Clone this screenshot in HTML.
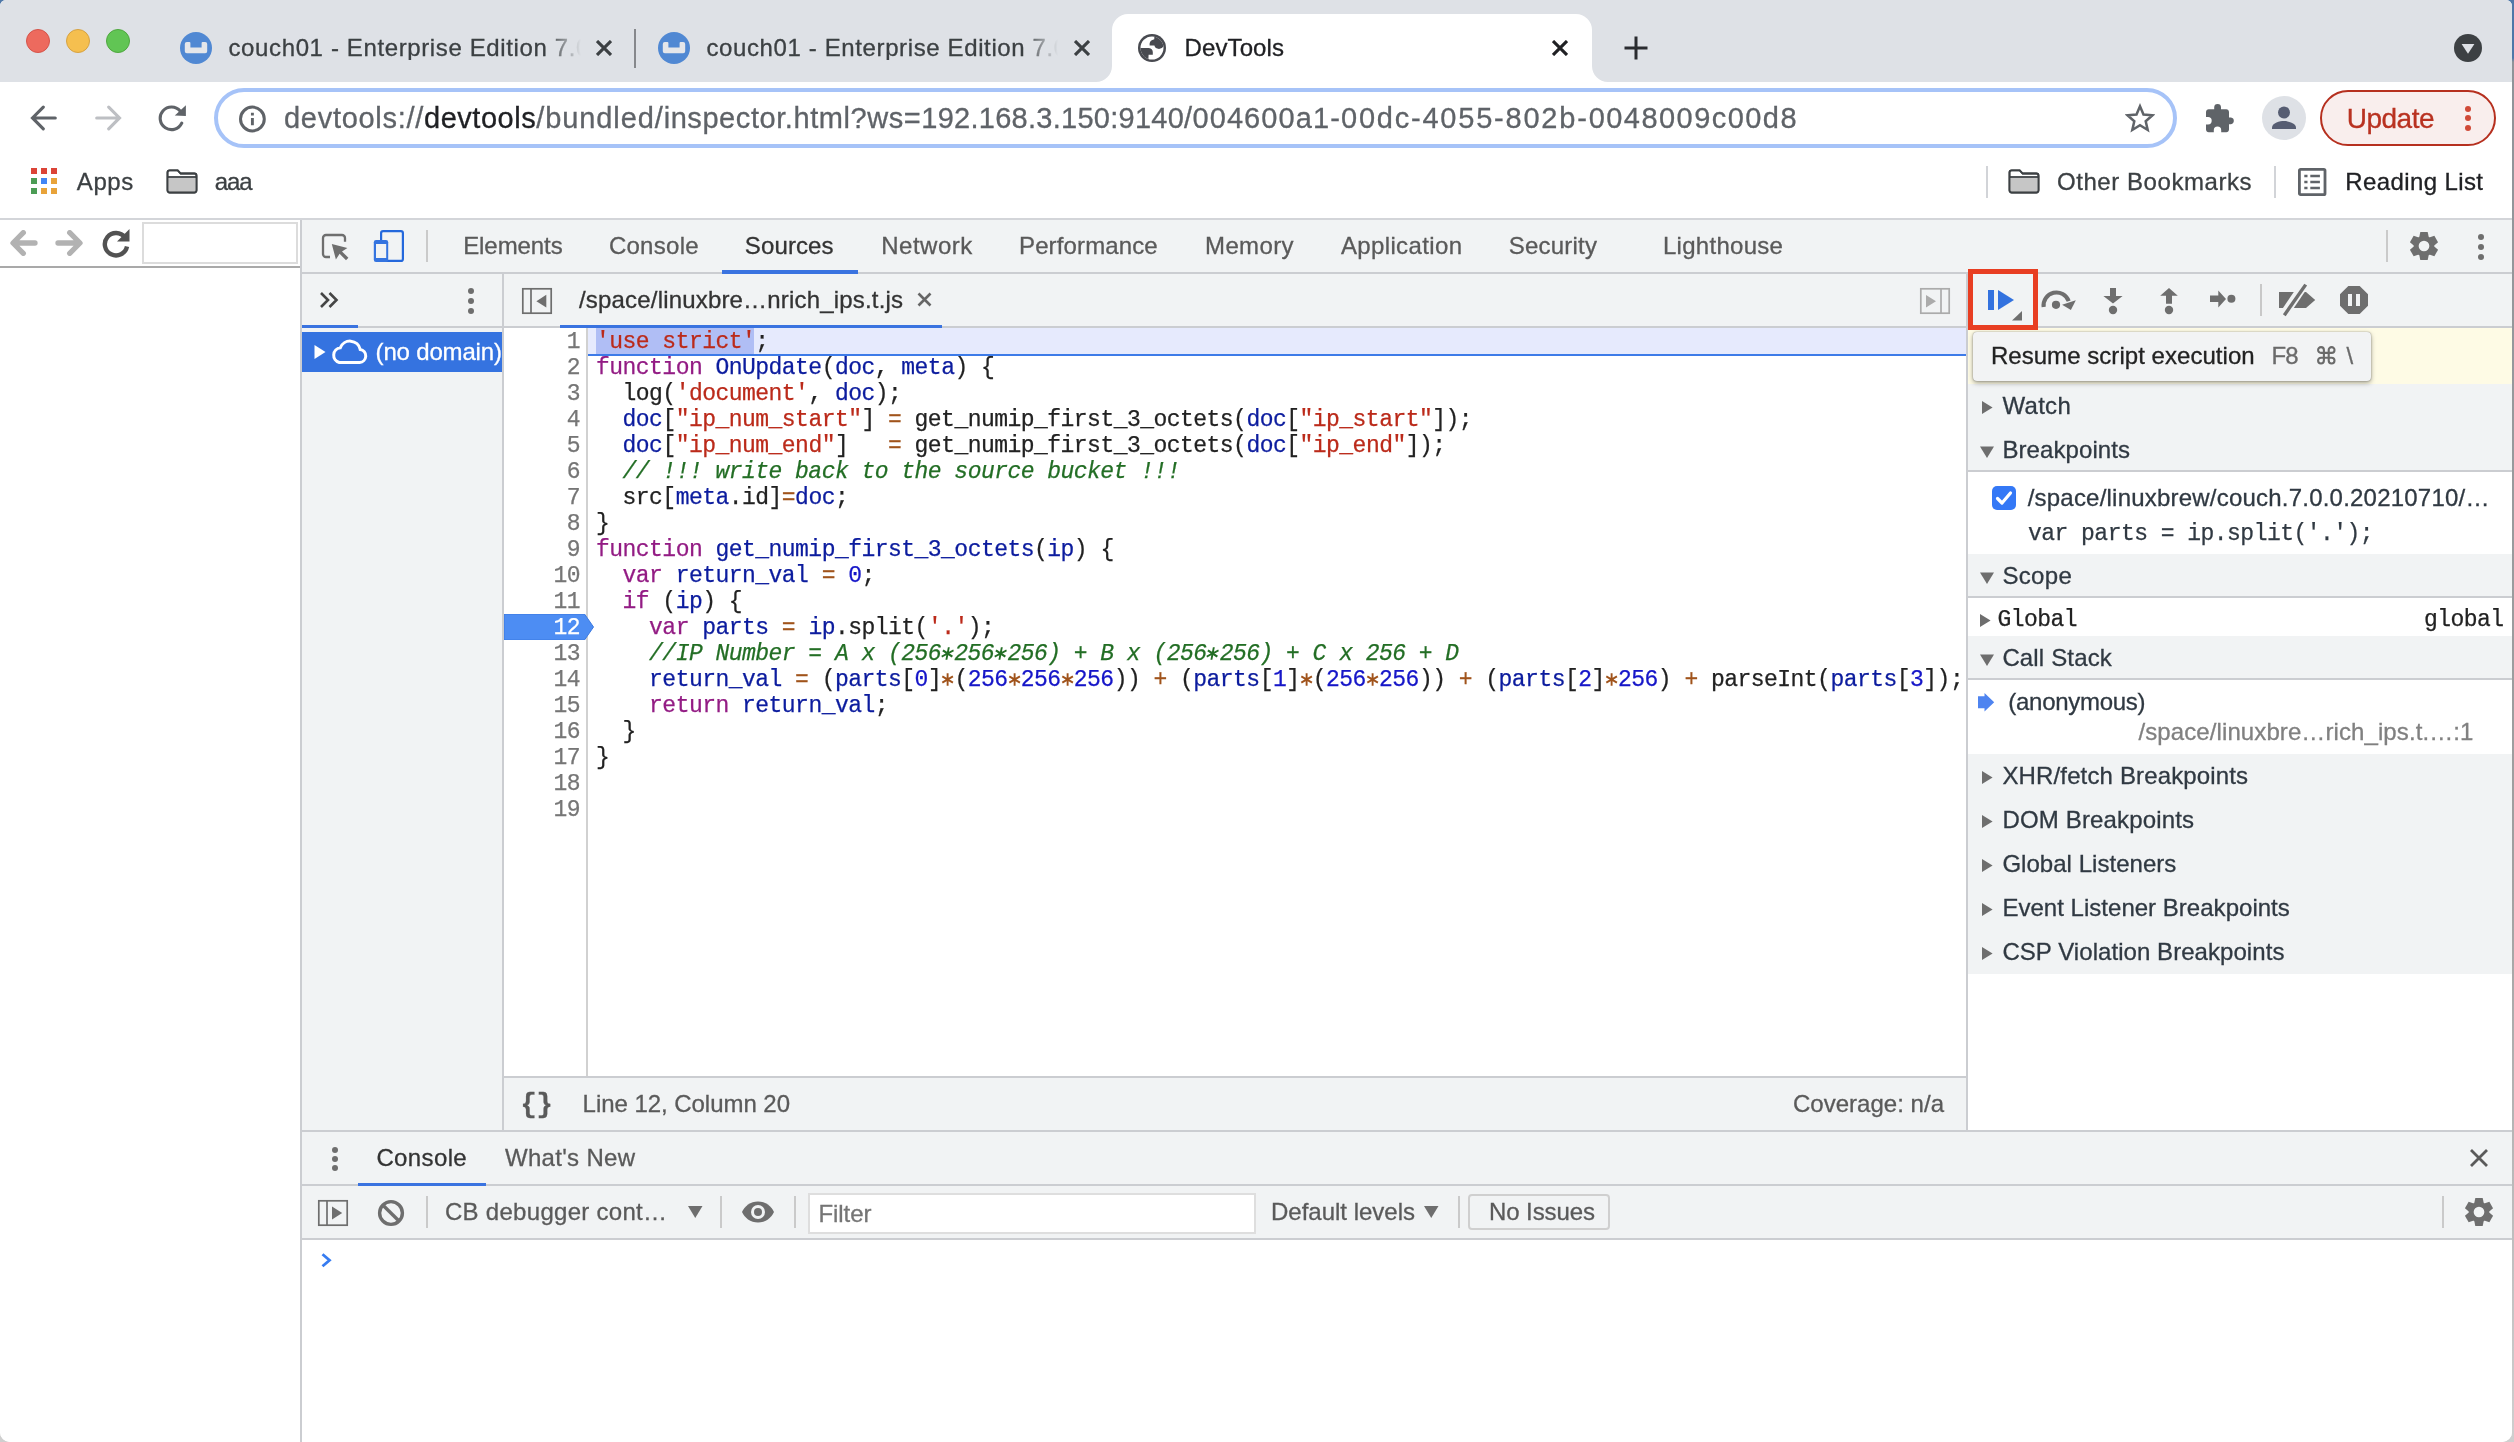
<!DOCTYPE html>
<html><head><meta charset="utf-8"><title>DevTools</title>
<style>
html,body{margin:0;padding:0;}
body{width:2514px;height:1442px;overflow:hidden;position:relative;background:linear-gradient(#4f78a8 0,#4f78a8 58px,#8f9499 62px,#a0a0a0 60%,#cfcfcf 100%);font-family:"Liberation Sans",sans-serif;}
.r{position:absolute;display:block;box-sizing:border-box;}
.t{position:absolute;white-space:pre;font-family:"Liberation Sans",sans-serif;-webkit-text-stroke:0.3px currentColor;}
.m{font-family:"Liberation Mono",monospace;}
#win{position:absolute;left:0;top:0;width:2512px;height:1442px;background:#fff;border-radius:6px 6px 10px 10px;overflow:hidden;}
.code{position:absolute;white-space:pre;font-family:"Liberation Mono",monospace;font-size:23px;line-height:26px;letter-spacing:-0.530px;color:#222;-webkit-text-stroke:0.25px currentColor;}
.as{display:inline-block;vertical-align:baseline;overflow:visible;}
.k{color:#931c84}.d{color:#0c1c9e}.s{color:#bb2a1a}.n{color:#1616c8}.o{color:#a0531b}.c{color:#236e25;font-style:italic}
#ly{position:absolute;left:0;top:0;width:2512px;height:1442px;will-change:transform;}

</style></head>
<body>
<div id="win"><div id="ly">
<div class="r" style="left:0px;top:0px;width:2512px;height:82px;background:#dee1e6;"></div>
<div class="r" style="left:26px;top:29px;width:24px;height:24px;background:#ed6a5e;border-radius:50%;border:1px solid #d5544a;"></div>
<div class="r" style="left:66px;top:29px;width:24px;height:24px;background:#f5bf4f;border-radius:50%;border:1px solid #d6a243;"></div>
<div class="r" style="left:106px;top:29px;width:24px;height:24px;background:#61c554;border-radius:50%;border:1px solid #4fa73f;"></div>
<svg class="r" style="left:180px;top:32px;" width="32" height="32" viewBox="0 0 32 32"><circle cx="16" cy="16" r="16" fill="#5088d3"/><path d="M4.800 12q0-2 2-2h2.600q1 0 1 1v4.500h11.200V11q0-1 1-1h2.600q2 0 2 2v7.200q0 2-2 2H6.800q-2 0-2-2z" fill="#e4e6ea"/></svg>
<span class="t" style="left:228.50px;top:36.00px;font-size:24px;line-height:24px;color:#3c4043;letter-spacing:0.622px;width:352px;overflow:hidden;-webkit-mask-image:linear-gradient(90deg,#000 318px,transparent 352px);">couch01 - Enterprise Edition 7.0</span>
<svg class="r" style="left:596px;top:40px;" width="16" height="16" viewBox="0 0 16 16"><path d="M1 1l14 14M15 1L1 15" stroke="#3c4043" stroke-width="3.1" fill="none"/></svg>
<div class="r" style="left:634px;top:29px;width:2px;height:39px;background:#86888c;"></div>
<svg class="r" style="left:658px;top:32px;" width="32" height="32" viewBox="0 0 32 32"><circle cx="16" cy="16" r="16" fill="#5088d3"/><path d="M4.800 12q0-2 2-2h2.600q1 0 1 1v4.500h11.200V11q0-1 1-1h2.600q2 0 2 2v7.200q0 2-2 2H6.800q-2 0-2-2z" fill="#e4e6ea"/></svg>
<span class="t" style="left:706.40px;top:36.00px;font-size:24px;line-height:24px;color:#3c4043;letter-spacing:0.622px;width:352px;overflow:hidden;-webkit-mask-image:linear-gradient(90deg,#000 318px,transparent 352px);">couch01 - Enterprise Edition 7.0</span>
<svg class="r" style="left:1074px;top:40px;" width="16" height="16" viewBox="0 0 16 16"><path d="M1 1l14 14M15 1L1 15" stroke="#3c4043" stroke-width="3.1" fill="none"/></svg>
<div class="r" style="left:1112px;top:14px;width:480px;height:70px;background:#fff;border-radius:16px 16px 0 0;"></div>
<svg class="r" style="left:1096px;top:66px;" width="16" height="16" viewBox="0 0 16 16"><path d="M16 0v16H0C8.8 16 16 8.800 16 0z" fill="#fff"/></svg>
<svg class="r" style="left:1592px;top:66px;" width="16" height="16" viewBox="0 0 16 16"><path d="M0 0v16h16C7.200 16 0 8.800 0 0z" fill="#fff"/></svg>
<svg class="r" style="left:1138px;top:34px;" width="28" height="28" viewBox="0 0 28 28"><defs><clipPath id="gc"><circle cx="14" cy="14" r="11.500"/></clipPath></defs><circle cx="14" cy="14" r="14" fill="#484a50"/><circle cx="14" cy="14" r="11.500" fill="#fff"/><g clip-path="url(#gc)" fill="#484a50"><path d="M16.300 1v4.200Q12 6.300 11.600 9.500v2.100h4.800Q17.200 14.800 21 14.900 24.200 14.600 25.800 12.200L28 12V0H16z"/><path d="M0 14h10.900Q14.600 14.500 14.800 18v2.800h-4.200L10.300 27 0 28z"/></g></svg>
<span class="t" style="left:1184.50px;top:36.00px;font-size:24px;line-height:24px;color:#202124;letter-spacing:0.112px;">DevTools</span>
<svg class="r" style="left:1552px;top:40px;" width="16" height="16" viewBox="0 0 16 16"><path d="M1 1l14 14M15 1L1 15" stroke="#202124" stroke-width="3.1" fill="none"/></svg>
<svg class="r" style="left:1624px;top:36px;" width="24" height="24" viewBox="0 0 24 24"><path d="M12 0.500v23M0.500 12h23" stroke="#2a2c30" stroke-width="3" fill="none"/></svg>
<svg class="r" style="left:2454px;top:34px;" width="28" height="28" viewBox="0 0 28 28"><circle cx="14" cy="14" r="14" fill="#3c4043"/><path d="M7.600 10h12.800L14 19.800z" fill="#dee1e6"/></svg>
<div class="r" style="left:0px;top:82px;width:2512px;height:136px;background:#fff;"></div>
<svg class="r" style="left:30px;top:104.7px;" width="28" height="26" viewBox="0 0 28 26"><path d="M25.300 12.950H3.200M13.300 2.100L2.500 12.950l10.800 10.850" stroke="#5f6368" stroke-width="3.100" fill="none" stroke-linecap="round" stroke-linejoin="miter"/></svg>
<svg class="r" style="left:94px;top:104.7px;transform:scaleX(-1);" width="28" height="26" viewBox="0 0 28 26"><path d="M25.300 12.950H3.200M13.300 2.100L2.500 12.950l10.800 10.850" stroke="#bdbfc3" stroke-width="3.100" fill="none" stroke-linecap="round" stroke-linejoin="miter"/></svg>
<svg class="r" style="left:158px;top:103px;" width="30" height="30" viewBox="0 0 30 30"><path d="M22.160 8.040A11.300 11.300 0 1 0 23.740 20.080" stroke="#5f6368" stroke-width="3.100" fill="none" stroke-linecap="round"/><path d="M27.900 2.200v10.800l-11.100-.4z" fill="#5f6368"/></svg>
<div class="r" style="left:214px;top:88px;width:1963px;height:60px;background:#fff;border:4.300px solid #a6c3f8;border-radius:30px;"></div>
<svg class="r" style="left:238px;top:104.5px;" width="29" height="29" viewBox="0 0 29 29"><circle cx="14.400" cy="14" r="11.900" stroke="#5f6368" stroke-width="3" fill="none"/><path d="M14.400 12.900v7.400M14.400 7.800v2.600" stroke="#5f6368" stroke-width="2.900"/></svg>
<span class="t" style="left:284.00px;top:104.00px;font-size:29px;line-height:29px;color:#5f6368;"><span style="color:#5f6368;letter-spacing:0.710px">devtools://</span><span style="color:#202124;letter-spacing:0.536px">devtools</span><span style="color:#5f6368;letter-spacing:0.886px">/bundled/</span><span style="color:#5f6368;letter-spacing:0.571px">inspector.html?ws=</span><span style="color:#5f6368;letter-spacing:0.263px">192.168.3.150:9140/</span><span style="color:#5f6368;letter-spacing:1.101px">004600a1-</span><span style="color:#5f6368;letter-spacing:1.781px">00dc-4055-802b-</span><span style="color:#5f6368;letter-spacing:1.457px">0048009c00d8</span></span>
<svg class="r" style="left:2125px;top:103px;" width="30" height="30" viewBox="0 0 30 30"><path d="M15 3.200l3.500 8.300 9 .8-6.800 5.900 2 8.800L15 22.300 7.300 27l2-8.800L2.500 12.300l9-.8z" stroke="#5f6368" stroke-width="2.500" fill="none" stroke-linejoin="miter"/></svg>
<svg class="r" style="left:2204px;top:102px;" width="32" height="32" viewBox="0 0 32 32"><path d="M27 15.500h-2V10c0-1.500-1.200-2.700-2.700-2.700H17v-2a3.400 3.400 0 0 0-6.800 0v2H4.700C3.200 7.300 2 8.500 2 10v5.100h2a3.700 3.700 0 0 1 0 7.400H2v5.100c0 1.500 1.200 2.700 2.700 2.700h5.100v-2a3.700 3.700 0 0 1 7.400 0v2h5.100c1.500 0 2.700-1.200 2.700-2.700v-5.400h2a3.400 3.400 0 0 0 0-6.700z" fill="#5f6368"/></svg>
<svg class="r" style="left:2262px;top:96px;" width="44" height="44" viewBox="0 0 44 44"><circle cx="22" cy="22" r="22" fill="#dee1e6"/><circle cx="22" cy="16.500" r="6" fill="#565d72"/><path d="M10 31.500c0-4.600 8-6.500 12-6.500s12 1.900 12 6.500V33H10z" fill="#565d72"/></svg>
<div class="r" style="left:2320px;top:90px;width:176px;height:56px;background:#f9eeed;border:2.300px solid #b6301f;border-radius:28px;"></div>
<span class="t" style="left:2346.70px;top:105.00px;font-size:28px;line-height:28px;color:#b93221;letter-spacing:-0.499px;">Update</span>
<div class="r" style="left:2465px;top:105.5px;width:6px;height:6px;background:#d04a38;border-radius:50%;"></div>
<div class="r" style="left:2465px;top:115.3px;width:6px;height:6px;background:#d04a38;border-radius:50%;"></div>
<div class="r" style="left:2465px;top:125.2px;width:6px;height:6px;background:#d04a38;border-radius:50%;"></div>
<div class="r" style="left:31px;top:168px;width:6px;height:6px;background:#db4437;"></div>
<div class="r" style="left:41px;top:168px;width:6px;height:6px;background:#db4437;"></div>
<div class="r" style="left:51px;top:168px;width:6px;height:6px;background:#db4437;"></div>
<div class="r" style="left:31px;top:178px;width:6px;height:6px;background:#4c9c55;"></div>
<div class="r" style="left:41px;top:178px;width:6px;height:6px;background:#4285f4;"></div>
<div class="r" style="left:51px;top:178px;width:6px;height:6px;background:#e8a33a;"></div>
<div class="r" style="left:31px;top:188px;width:6px;height:6px;background:#4c9c55;"></div>
<div class="r" style="left:41px;top:188px;width:6px;height:6px;background:#e8a33a;"></div>
<div class="r" style="left:51px;top:188px;width:6px;height:6px;background:#e8a33a;"></div>
<span class="t" style="left:76.80px;top:170.00px;font-size:24px;line-height:24px;color:#3c4043;letter-spacing:0.599px;">Apps</span>
<svg class="r" style="left:166px;top:168px;" width="32" height="26" viewBox="0 0 32 26"><path d="M1.500 4.500c0-1.400.8-2.200 2.200-2.200h8l3 3.200h13.600c1.400 0 2.200.8 2.200 2.200v14.600c0 1.400-.8 2.200-2.200 2.200H3.700c-1.400 0-2.200-.8-2.200-2.200z" fill="#fff" stroke="#3c4043" stroke-width="1.800"/><path d="M2.400 9.800h27.200v12.600c0 .8-.5 1.300-1.300 1.300H3.700c-.8 0-1.300-.5-1.300-1.300z" fill="#c6c6c6"/><path d="M1.500 9h29" stroke="#3c4043" stroke-width="1.800"/><path d="M1.500 4.500c0-1.400.8-2.200 2.200-2.200h8l3 3.200h13.600c1.400 0 2.200.8 2.200 2.200v14.600c0 1.400-.8 2.200-2.200 2.200H3.700c-1.400 0-2.200-.8-2.200-2.200z" fill="none" stroke="#3c4043" stroke-width="1.800"/></svg>
<span class="t" style="left:214.80px;top:170.00px;font-size:24px;line-height:24px;color:#3c4043;letter-spacing:-1.073px;">aaa</span>
<div class="r" style="left:1986px;top:166px;width:2px;height:32px;background:#d2d4d8;"></div>
<svg class="r" style="left:2008px;top:168px;" width="32" height="26" viewBox="0 0 32 26"><path d="M1.500 4.500c0-1.400.8-2.200 2.200-2.200h8l3 3.200h13.600c1.400 0 2.200.8 2.200 2.200v14.600c0 1.400-.8 2.200-2.200 2.200H3.700c-1.400 0-2.200-.8-2.200-2.200z" fill="#fff" stroke="#3c4043" stroke-width="1.800"/><path d="M2.400 9.800h27.200v12.600c0 .8-.5 1.300-1.300 1.300H3.700c-.8 0-1.300-.5-1.300-1.300z" fill="#c6c6c6"/><path d="M1.500 9h29" stroke="#3c4043" stroke-width="1.800"/><path d="M1.500 4.500c0-1.400.8-2.200 2.200-2.200h8l3 3.200h13.600c1.400 0 2.200.8 2.200 2.200v14.600c0 1.400-.8 2.200-2.200 2.200H3.700c-1.400 0-2.200-.8-2.200-2.200z" fill="none" stroke="#3c4043" stroke-width="1.800"/></svg>
<span class="t" style="left:2057.00px;top:170.00px;font-size:24px;line-height:24px;color:#3c4043;letter-spacing:0.555px;">Other Bookmarks</span>
<div class="r" style="left:2274px;top:166px;width:2px;height:32px;background:#d2d4d8;"></div>
<svg class="r" style="left:2298px;top:168px;" width="29" height="28" viewBox="0 0 29 28"><rect x="1.400" y="1.400" width="25.600" height="25.200" rx="1.200" fill="none" stroke="#5f6368" stroke-width="2.800"/><path d="M6.300 8h3.200M6.300 14h3.200M6.300 20h3.200M12.300 8h9.600M12.300 14h9.600M12.300 20h9.600" stroke="#5f6368" stroke-width="2.600"/></svg>
<span class="t" style="left:2345.20px;top:170.00px;font-size:24px;line-height:24px;color:#202124;letter-spacing:0.398px;">Reading List</span>
<div class="r" style="left:0px;top:218px;width:2512px;height:2px;background:#d3d5d9;"></div>
<div class="r" style="left:0px;top:220px;width:300px;height:1222px;background:#fff;"></div>
<svg class="r" style="left:8px;top:230px;" width="32" height="26" viewBox="0 0 32 26"><path d="M27 13H6M15.300 2.700L5 13l10.300 10.300" stroke="#b2b2b2" stroke-width="5.300" fill="none" stroke-linecap="round" stroke-linejoin="round"/></svg>
<svg class="r" style="left:53px;top:230px;transform:scaleX(-1);" width="32" height="26" viewBox="0 0 32 26"><path d="M27 13H6M15.300 2.700L5 13l10.300 10.300" stroke="#b2b2b2" stroke-width="5.300" fill="none" stroke-linecap="round" stroke-linejoin="round"/></svg>
<svg class="r" style="left:100px;top:227px;" width="32" height="32" viewBox="0 0 32 32"><path d="M25 10.500A11.200 11.200 0 1 0 27 19.500" stroke="#525252" stroke-width="4.400" fill="none"/><path d="M29.500 2v12.500H17z" fill="#525252"/></svg>
<div class="r" style="left:142px;top:222px;width:156px;height:42px;background:#fff;border:2px solid #dcdcdc;"></div>
<div class="r" style="left:0px;top:266px;width:300px;height:2px;background:#a9a9a9;"></div>
<div class="r" style="left:300px;top:220px;width:2px;height:1222px;background:#cbcdd1;"></div>
<div class="r" style="left:302px;top:220px;width:2210px;height:52px;background:#f1f3f4;"></div>
<div class="r" style="left:302px;top:272px;width:2210px;height:2px;background:#cbcdd1;"></div>
<svg class="r" style="left:320px;top:232px;" width="30" height="30" viewBox="0 0 30 30"><path d="M25 9.800V6a3 3 0 0 0-3-3H6a3 3 0 0 0-3 3v16a3 3 0 0 0 3 3h4" stroke="#6e6e6e" stroke-width="2.300" fill="none"/><path d="M11.800 11.900l15.600 4.100-5.400 3.400 6.400 6.400-2.400 2.400-6.400-6.400-3.700 5.700z" fill="#6e6e6e"/></svg>
<svg class="r" style="left:372px;top:228px;" width="34" height="36" viewBox="0 0 34 36"><rect x="9.100" y="3.100" width="21.800" height="29.800" rx="2" fill="none" stroke="#2468dc" stroke-width="2.200"/><rect x="1.800" y="12" width="14.400" height="22" rx="2.200" fill="#3574e0"/><rect x="4" y="16" width="10.200" height="14" fill="#f1f3f4"/></svg>
<div class="r" style="left:426px;top:230px;width:2px;height:32px;background:#cacaca;"></div>
<span class="t" style="left:463.20px;top:234.00px;font-size:24px;line-height:24px;color:#5a5a5a;letter-spacing:-0.078px;">Elements</span>
<span class="t" style="left:608.90px;top:234.00px;font-size:24px;line-height:24px;color:#5a5a5a;letter-spacing:0.273px;">Console</span>
<span class="t" style="left:744.80px;top:234.00px;font-size:24px;line-height:24px;color:#333;letter-spacing:0.126px;">Sources</span>
<span class="t" style="left:881.20px;top:234.00px;font-size:24px;line-height:24px;color:#5a5a5a;letter-spacing:0.511px;">Network</span>
<span class="t" style="left:1019.00px;top:234.00px;font-size:24px;line-height:24px;color:#5a5a5a;letter-spacing:0.131px;">Performance</span>
<span class="t" style="left:1205.00px;top:234.00px;font-size:24px;line-height:24px;color:#5a5a5a;letter-spacing:0.386px;">Memory</span>
<span class="t" style="left:1340.90px;top:234.00px;font-size:24px;line-height:24px;color:#5a5a5a;letter-spacing:0.368px;">Application</span>
<span class="t" style="left:1508.80px;top:234.00px;font-size:24px;line-height:24px;color:#5a5a5a;letter-spacing:0.200px;">Security</span>
<span class="t" style="left:1663.00px;top:234.00px;font-size:24px;line-height:24px;color:#5a5a5a;letter-spacing:0.274px;">Lighthouse</span>
<div class="r" style="left:722px;top:270px;width:136px;height:4px;background:#3a73e0;"></div>
<div class="r" style="left:2386px;top:230px;width:2px;height:32px;background:#cacaca;"></div>
<svg class="r" style="left:2409px;top:231px;" width="30" height="30" viewBox="0 0 30 30"><g transform="translate(15 15)"><g fill="#6e6e6e"><path d="M-3.700-14.100h7.400L4.900-8h-9.800z" transform="rotate(0)"/><path d="M-3.700-14.100h7.400L4.900-8h-9.800z" transform="rotate(60)"/><path d="M-3.700-14.100h7.400L4.900-8h-9.800z" transform="rotate(120)"/><path d="M-3.700-14.100h7.400L4.900-8h-9.800z" transform="rotate(180)"/><path d="M-3.700-14.100h7.400L4.900-8h-9.800z" transform="rotate(240)"/><path d="M-3.700-14.100h7.400L4.900-8h-9.800z" transform="rotate(300)"/></g><circle r="7.800" fill="none" stroke="#6e6e6e" stroke-width="4.900"/></g></svg>
<div class="r" style="left:2477.8px;top:233.9px;width:6.2px;height:6.2px;background:#6e6e6e;border-radius:50%;"></div>
<div class="r" style="left:2477.8px;top:243.9px;width:6.2px;height:6.2px;background:#6e6e6e;border-radius:50%;"></div>
<div class="r" style="left:2477.8px;top:253.9px;width:6.2px;height:6.2px;background:#6e6e6e;border-radius:50%;"></div>
<div class="r" style="left:302px;top:274px;width:2210px;height:52px;background:#f1f3f4;"></div>
<div class="r" style="left:302px;top:326px;width:1664px;height:2px;background:#cbcdd1;"></div>
<div class="r" style="left:1968px;top:326px;width:544px;height:2px;background:#cbcdd1;"></div>
<div class="r" style="left:302px;top:325px;width:56px;height:3px;background:#3a73e0;"></div>
<svg class="r" style="left:318px;top:290px;" width="22" height="20" viewBox="0 0 22 20"><path d="M3 3l7 7-7 7M11.500 3l7 7-7 7" stroke="#454545" stroke-width="2.600" fill="none"/></svg>
<div class="r" style="left:468px;top:288px;width:6px;height:6px;background:#6e6e6e;border-radius:50%;"></div>
<div class="r" style="left:468px;top:298px;width:6px;height:6px;background:#6e6e6e;border-radius:50%;"></div>
<div class="r" style="left:468px;top:308px;width:6px;height:6px;background:#6e6e6e;border-radius:50%;"></div>
<div class="r" style="left:502px;top:274px;width:2px;height:858px;background:#cbcdd1;"></div>
<svg class="r" style="left:521px;top:287px;" width="32" height="28" viewBox="0 0 32 28"><rect x="1.800" y="1.800" width="28.400" height="24.400" fill="none" stroke="#6e6e6e" stroke-width="1.700"/><path d="M10 2v24" stroke="#6e6e6e" stroke-width="1.700"/><path d="M25.300 7.800v12.800L15.400 14.200z" fill="#6e6e6e"/></svg>
<span class="t" style="left:579.00px;top:288.00px;font-size:24px;line-height:24px;color:#333;letter-spacing:0.179px;">/space/linuxbre…nrich_ips.t.js</span>
<svg class="r" style="left:916.5px;top:291.5px;" width="15" height="15" viewBox="0 0 15 15"><path d="M1.500 1.500l12 12M13.500 1.500l-12 12" stroke="#666" stroke-width="2.600" fill="none"/></svg>
<div class="r" style="left:560px;top:325px;width:382px;height:3px;background:#3a73e0;"></div>
<svg class="r" style="left:1919px;top:287px;" width="32" height="28" viewBox="0 0 32 28"><rect x="1.800" y="1.800" width="28.400" height="24.400" fill="none" stroke="#ababab" stroke-width="1.700"/><path d="M22 2v24" stroke="#ababab" stroke-width="1.700"/><path d="M7 8v12.400l10-6.200z" fill="#ababab"/></svg>
<div class="r" style="left:1966px;top:274px;width:2px;height:858px;background:#cbcdd1;"></div>
<div class="r" style="left:1988px;top:290px;width:6px;height:20px;background:#3372df;"></div>
<svg class="r" style="left:1998px;top:290px;" width="16" height="20" viewBox="0 0 16 20"><path d="M0 0v20l16-10z" fill="#3372df"/></svg>
<svg class="r" style="left:2012px;top:310.5px;" width="10" height="10" viewBox="0 0 10 10"><path d="M10 0v9.500H0z" fill="#6e6e6e"/></svg>
<svg class="r" style="left:2038px;top:286px;" width="40" height="28" viewBox="0 0 40 28"><path d="M5.650 21.100A12.950 12.950 0 0 1 30.700 15.100" stroke="#6e6e6e" stroke-width="4.100" fill="none"/><path d="M37.800 14.200L32.900 24 24.100 18.800z" fill="#6e6e6e"/><circle cx="18" cy="18.800" r="4.100" fill="#6e6e6e"/></svg>
<svg class="r" style="left:2102px;top:286px;" width="22" height="30" viewBox="0 0 22 30"><path d="M8 2h6v8h6.600L11 17.400 1.400 10H8z" fill="#6e6e6e"/><circle cx="11" cy="24" r="4.200" fill="#6e6e6e"/></svg>
<svg class="r" style="left:2158px;top:286px;" width="22" height="30" viewBox="0 0 22 30"><path d="M11 2l8.800 7.800H14v8H8v-8H2.200z" fill="#6e6e6e"/><circle cx="11" cy="24" r="4.200" fill="#6e6e6e"/></svg>
<svg class="r" style="left:2208px;top:288px;" width="30" height="22" viewBox="0 0 30 22"><path d="M2 7.600h8.300V2.500L18 11l-7.700 8.500v-5.500H2z" fill="#6e6e6e"/><circle cx="23.400" cy="10.800" r="4" fill="#6e6e6e"/></svg>
<div class="r" style="left:2260px;top:284px;width:2px;height:32px;background:#c8c8c8;"></div>
<svg class="r" style="left:2276px;top:282px;" width="42" height="36" viewBox="0 0 42 36"><path d="M3 10h27l9.200 8-9.200 8H3z" fill="#6e6e6e"/><path d="M6 35.500L30 0" stroke="#f1f3f4" stroke-width="9"/><path d="M8.300 33.200L29.700 2.600" stroke="#6e6e6e" stroke-width="3.400"/></svg>
<svg class="r" style="left:2339px;top:285px;" width="30" height="30" viewBox="0 0 30 30"><path d="M9.300 1h11.400L29 9.300v11.400L20.700 29H9.300L1 20.700V9.300z" fill="#6e6e6e"/><path d="M11 9v12M19 9v12" stroke="#f1f3f4" stroke-width="4"/></svg>
<div class="r" style="left:302px;top:328px;width:200px;height:804px;background:#f1f3f4;"></div>
<div class="r" style="left:302px;top:332px;width:200px;height:40px;background:#3573e0;"></div>
<svg class="r" style="left:313.8px;top:345px;" width="12" height="14" viewBox="0 0 12 14"><path d="M0.500 0v14l11-7z" fill="#fff"/></svg>
<svg class="r" style="left:328.3px;top:337px;" width="42" height="29" viewBox="0 0 42 29"><path d="M11.300 25.500h20.300a6.600 6.600 0 0 0 .6-13.100A10.400 10.400 0 0 0 12.300 10.800 7.500 7.500 0 0 0 11.300 25.500z" fill="none" stroke="#fff" stroke-width="3"/></svg>
<span class="t" style="left:375.60px;top:340.00px;font-size:24px;line-height:24px;color:#fff;letter-spacing:-0.176px;">(no domain)</span>
<div class="r" style="left:504px;top:328px;width:1462px;height:748px;background:#fff;"></div>
<div class="r" style="left:586px;top:328px;width:2px;height:748px;background:#d1d1d1;"></div>
<div class="r" style="left:588px;top:328px;width:1378px;height:26px;background:#e6eafd;"></div>
<div class="r" style="left:588px;top:354px;width:1378px;height:2px;background:#3d7be8;"></div>
<div class="r" style="left:596px;top:328px;width:158px;height:26px;background:#b0bef5;"></div>
<svg class="r" style="left:504px;top:614px;" width="92" height="26" viewBox="0 0 92 26"><path d="M0 0h80.500l9 13-9 13H0z" fill="#4d8df3"/><path d="M0 0h80.500l9 13-9 13H0z" fill="none" stroke="#3b79e0" stroke-width="1"/></svg>
<div class="code" style="left:596px;top:329px;"><span class="s">'use strict'</span>;
<span class="k">function</span> <span class="d">OnUpdate</span>(<span class="d">doc</span>, <span class="d">meta</span>) {
  log(<span class="s">'document'</span>, <span class="d">doc</span>);
  <span class="d">doc</span>[<span class="s">"ip_num_start"</span>] <span class="o">=</span> get_numip_first_3_octets(<span class="d">doc</span>[<span class="s">"ip_start"</span>]);
  <span class="d">doc</span>[<span class="s">"ip_num_end"</span>]   <span class="o">=</span> get_numip_first_3_octets(<span class="d">doc</span>[<span class="s">"ip_end"</span>]);
  <span class="c">// !!! write back to the source bucket !!!</span>
  src[<span class="d">meta</span>.id]<span class="o">=</span><span class="d">doc</span>;
}
<span class="k">function</span> <span class="d">get_numip_first_3_octets</span>(<span class="d">ip</span>) {
  <span class="k">var</span> <span class="d">return_val</span> <span class="o">=</span> <span class="n">0</span>;
  <span class="k">if</span> (<span class="d">ip</span>) {
    <span class="k">var</span> <span class="d">parts</span> <span class="o">=</span> <span class="d">ip</span>.split(<span class="s">'.'</span>);
    <span class="c">//IP Number = A x (256<svg class="as" width="13.24" height="13" viewBox="0 0 13.24 13" style="transform:skewX(-11deg)"><path d="M6.620 0.300v12.400M1.300 3.400l10.640 6.200M11.940 3.400L1.300 9.600" stroke="#236e25" stroke-width="1.900" fill="none"/></svg>256<svg class="as" width="13.24" height="13" viewBox="0 0 13.24 13" style="transform:skewX(-11deg)"><path d="M6.620 0.300v12.400M1.300 3.400l10.640 6.200M11.940 3.400L1.300 9.600" stroke="#236e25" stroke-width="1.900" fill="none"/></svg>256) + B x (256<svg class="as" width="13.24" height="13" viewBox="0 0 13.24 13" style="transform:skewX(-11deg)"><path d="M6.620 0.300v12.400M1.300 3.400l10.640 6.200M11.940 3.400L1.300 9.600" stroke="#236e25" stroke-width="1.900" fill="none"/></svg>256) + C x 256 + D</span>
    <span class="d">return_val</span> <span class="o">=</span> (<span class="d">parts</span>[<span class="n">0</span>]<svg class="as" width="13.24" height="13" viewBox="0 0 13.24 13"><path d="M6.620 0.300v12.400M1.300 3.400l10.640 6.200M11.940 3.400L1.300 9.600" stroke="#a0531b" stroke-width="1.900" fill="none"/></svg>(<span class="n">256</span><svg class="as" width="13.24" height="13" viewBox="0 0 13.24 13"><path d="M6.620 0.300v12.400M1.300 3.400l10.640 6.200M11.940 3.400L1.300 9.600" stroke="#a0531b" stroke-width="1.900" fill="none"/></svg><span class="n">256</span><svg class="as" width="13.24" height="13" viewBox="0 0 13.24 13"><path d="M6.620 0.300v12.400M1.300 3.400l10.640 6.200M11.940 3.400L1.300 9.600" stroke="#a0531b" stroke-width="1.900" fill="none"/></svg><span class="n">256</span>)) <span class="o">+</span> (<span class="d">parts</span>[<span class="n">1</span>]<svg class="as" width="13.24" height="13" viewBox="0 0 13.24 13"><path d="M6.620 0.300v12.400M1.300 3.400l10.640 6.200M11.940 3.400L1.300 9.600" stroke="#a0531b" stroke-width="1.900" fill="none"/></svg>(<span class="n">256</span><svg class="as" width="13.24" height="13" viewBox="0 0 13.24 13"><path d="M6.620 0.300v12.400M1.300 3.400l10.640 6.200M11.940 3.400L1.300 9.600" stroke="#a0531b" stroke-width="1.900" fill="none"/></svg><span class="n">256</span>)) <span class="o">+</span> (<span class="d">parts</span>[<span class="n">2</span>]<svg class="as" width="13.24" height="13" viewBox="0 0 13.24 13"><path d="M6.620 0.300v12.400M1.300 3.400l10.640 6.200M11.940 3.400L1.300 9.600" stroke="#a0531b" stroke-width="1.900" fill="none"/></svg><span class="n">256</span>) <span class="o">+</span> parseInt(<span class="d">parts</span>[<span class="n">3</span>]);
    <span class="k">return</span> <span class="d">return_val</span>;
  }
}

</div>
<div class="code" style="left:504px;top:329px;width:76px;text-align:right;color:#767676;">1
2
3
4
5
6
7
8
9
10
11
<span style="color:#fff">12</span>
13
14
15
16
17
18
19</div>
<div class="r" style="left:504px;top:1076px;width:1462px;height:2px;background:#cbcdd1;"></div>
<div class="r" style="left:504px;top:1078px;width:1462px;height:52px;background:#f1f3f4;"></div>
<span class="t m" style="left:520.50px;top:1092.00px;font-size:27px;line-height:27px;color:#5a5a5a;font-weight:bold;letter-spacing:-0.300px;">{}</span>
<span class="t" style="left:582.60px;top:1092.00px;font-size:24px;line-height:24px;color:#5a5a5a;letter-spacing:-0.044px;">Line 12, Column 20</span>
<span class="t" style="left:1793.00px;top:1092.00px;font-size:24px;line-height:24px;color:#5a5a5a;letter-spacing:0.020px;">Coverage: n/a</span>
<div class="r" style="left:1968px;top:328px;width:544px;height:802px;background:#fff;"></div>
<div class="r" style="left:1968px;top:328px;width:544px;height:56px;background:#fefbe5;"></div>
<div class="r" style="left:1968px;top:384px;width:544px;height:44px;background:#f1f3f4;"></div>
<svg class="r" style="left:1981.5px;top:400.7px;" width="11" height="13" viewBox="0 0 11 13"><path d="M0 0v13l10.600-6.500z" fill="#6e6e6e"/></svg>
<span class="t" style="left:2002.40px;top:394.00px;font-size:24px;line-height:24px;color:#303942;letter-spacing:0.319px;">Watch</span>
<div class="r" style="left:1968px;top:428px;width:544px;height:44px;background:#f1f3f4;"></div>
<div class="r" style="left:1968px;top:470px;width:544px;height:2px;background:#cbcdd1;"></div>
<svg class="r" style="left:1980px;top:445.5px;" width="14" height="12" viewBox="0 0 14 12"><path d="M0 0.500h14L7 12z" fill="#6e6e6e"/></svg>
<span class="t" style="left:2002.40px;top:438.00px;font-size:24px;line-height:24px;color:#303942;letter-spacing:0.085px;">Breakpoints</span>
<div class="r" style="left:1968px;top:554px;width:544px;height:44px;background:#f1f3f4;"></div>
<div class="r" style="left:1968px;top:596px;width:544px;height:2px;background:#cbcdd1;"></div>
<svg class="r" style="left:1980px;top:571.5px;" width="14" height="12" viewBox="0 0 14 12"><path d="M0 0.500h14L7 12z" fill="#6e6e6e"/></svg>
<span class="t" style="left:2002.40px;top:564.00px;font-size:24px;line-height:24px;color:#303942;letter-spacing:0.359px;">Scope</span>
<div class="r" style="left:1968px;top:636px;width:544px;height:44px;background:#f1f3f4;"></div>
<div class="r" style="left:1968px;top:678px;width:544px;height:2px;background:#cbcdd1;"></div>
<svg class="r" style="left:1980px;top:653.5px;" width="14" height="12" viewBox="0 0 14 12"><path d="M0 0.500h14L7 12z" fill="#6e6e6e"/></svg>
<span class="t" style="left:2002.40px;top:646.00px;font-size:24px;line-height:24px;color:#303942;letter-spacing:0.150px;">Call Stack</span>
<div class="r" style="left:1968px;top:754px;width:544px;height:44px;background:#f1f3f4;"></div>
<svg class="r" style="left:1981.5px;top:770.7px;" width="11" height="13" viewBox="0 0 11 13"><path d="M0 0v13l10.600-6.500z" fill="#6e6e6e"/></svg>
<span class="t" style="left:2002.40px;top:764.00px;font-size:24px;line-height:24px;color:#303942;letter-spacing:0.146px;">XHR/fetch Breakpoints</span>
<div class="r" style="left:1968px;top:798px;width:544px;height:44px;background:#f1f3f4;"></div>
<svg class="r" style="left:1981.5px;top:814.7px;" width="11" height="13" viewBox="0 0 11 13"><path d="M0 0v13l10.600-6.500z" fill="#6e6e6e"/></svg>
<span class="t" style="left:2002.40px;top:808.00px;font-size:24px;line-height:24px;color:#303942;letter-spacing:0.164px;">DOM Breakpoints</span>
<div class="r" style="left:1968px;top:842px;width:544px;height:44px;background:#f1f3f4;"></div>
<svg class="r" style="left:1981.5px;top:858.7px;" width="11" height="13" viewBox="0 0 11 13"><path d="M0 0v13l10.600-6.500z" fill="#6e6e6e"/></svg>
<span class="t" style="left:2002.40px;top:852.00px;font-size:24px;line-height:24px;color:#303942;letter-spacing:0.037px;">Global Listeners</span>
<div class="r" style="left:1968px;top:886px;width:544px;height:44px;background:#f1f3f4;"></div>
<svg class="r" style="left:1981.5px;top:902.7px;" width="11" height="13" viewBox="0 0 11 13"><path d="M0 0v13l10.600-6.500z" fill="#6e6e6e"/></svg>
<span class="t" style="left:2002.40px;top:896.00px;font-size:24px;line-height:24px;color:#303942;letter-spacing:0.023px;">Event Listener Breakpoints</span>
<div class="r" style="left:1968px;top:930px;width:544px;height:44px;background:#f1f3f4;"></div>
<svg class="r" style="left:1981.5px;top:946.7px;" width="11" height="13" viewBox="0 0 11 13"><path d="M0 0v13l10.600-6.500z" fill="#6e6e6e"/></svg>
<span class="t" style="left:2002.40px;top:940.00px;font-size:24px;line-height:24px;color:#303942;letter-spacing:0.057px;">CSP Violation Breakpoints</span>
<div class="r" style="left:1992px;top:486px;width:24px;height:24px;background:#3478f6;border-radius:5px;"></div>
<svg class="r" style="left:1992px;top:486px;" width="24" height="24" viewBox="0 0 24 24"><path d="M5.500 12.500l4.500 4.500 8.500-10" stroke="#fff" stroke-width="3.200" fill="none" stroke-linecap="round" stroke-linejoin="round"/></svg>
<span class="t" style="left:2027.70px;top:486.00px;font-size:24px;line-height:24px;color:#303942;letter-spacing:0.212px;">/space/linuxbrew/couch.7.0.0.20210710/…</span>
<span class="t m" style="left:2028.00px;top:523.00px;font-size:23px;line-height:23px;color:#303942;letter-spacing:-0.530px;-webkit-text-stroke:0.250px currentColor;">var parts = ip.split('.');</span>
<svg class="r" style="left:1980px;top:613.5px;" width="11" height="13" viewBox="0 0 11 13"><path d="M0 0v13l10.600-6.500z" fill="#6e6e6e"/></svg>
<span class="t m" style="left:1997.50px;top:609.00px;font-size:23px;line-height:23px;color:#222;letter-spacing:-0.530px;-webkit-text-stroke:0.250px currentColor;">Global</span>
<span class="t m" style="left:2424.00px;top:609.00px;font-size:23px;line-height:23px;color:#222;letter-spacing:-0.530px;-webkit-text-stroke:0.250px currentColor;">global</span>
<svg class="r" style="left:1977.8px;top:693.2px;" width="17" height="19" viewBox="0 0 17 19"><path d="M0 3.200h6.500V0L16.200 9.200 6.500 18.400V15.200H0z" fill="#4e84f0"/></svg>
<span class="t" style="left:2008.30px;top:690.00px;font-size:24px;line-height:24px;color:#303942;letter-spacing:-0.286px;">(anonymous)</span>
<span class="t" style="left:2138.50px;top:720.00px;font-size:24px;line-height:24px;color:#808080;letter-spacing:0.095px;">/space/linuxbre…rich_ips.t.…:1</span>
<div class="r" style="left:1973px;top:332px;width:398px;height:49px;background:#f2f3f4;border-radius:4px;box-shadow:0 2px 5px rgba(0,0,0,.35),0 0 1.500px rgba(0,0,0,.45);"></div>
<span class="t" style="left:1990.90px;top:344.00px;font-size:24px;line-height:24px;color:#222;letter-spacing:0.046px;">Resume script execution</span>
<span class="t" style="left:2271.50px;top:344.00px;font-size:24px;line-height:24px;color:#6a6a6a;letter-spacing:-1.016px;">F8</span>
<svg class="r" style="left:2317.3px;top:345.6px;" width="19" height="19" viewBox="0 0 19 19"><path d="M6.900 6.900V4A2.900 2.900 0 1 0 4 6.900H14.600A2.900 2.900 0 1 0 11.700 4V14.600A2.900 2.900 0 1 0 14.600 11.700H4A2.900 2.900 0 1 0 6.900 14.600Z" fill="none" stroke="#6a6a6a" stroke-width="2.100"/></svg>
<span class="t" style="left:2346.50px;top:344.00px;font-size:24px;line-height:24px;color:#6a6a6a;">\</span>
<div class="r" style="left:302px;top:1130px;width:2210px;height:2px;background:#cbcdd1;"></div>
<div class="r" style="left:302px;top:1132px;width:2210px;height:52px;background:#f1f3f4;"></div>
<div class="r" style="left:302px;top:1184px;width:2210px;height:2px;background:#cbcdd1;"></div>
<div class="r" style="left:331.8px;top:1146.7px;width:6px;height:6px;background:#6e6e6e;border-radius:50%;"></div>
<div class="r" style="left:331.8px;top:1155.8px;width:6px;height:6px;background:#6e6e6e;border-radius:50%;"></div>
<div class="r" style="left:331.8px;top:1165px;width:6px;height:6px;background:#6e6e6e;border-radius:50%;"></div>
<span class="t" style="left:376.40px;top:1146.00px;font-size:24px;line-height:24px;color:#333;letter-spacing:0.373px;">Console</span>
<span class="t" style="left:505.00px;top:1146.00px;font-size:24px;line-height:24px;color:#5a5a5a;letter-spacing:0.302px;">What's New</span>
<div class="r" style="left:358px;top:1182.5px;width:128px;height:3.5px;background:#3a73e0;"></div>
<svg class="r" style="left:2469px;top:1148px;" width="20" height="20" viewBox="0 0 20 20"><path d="M2 2l16 16M18 2L2 18" stroke="#5a5a5a" stroke-width="2.800" fill="none"/></svg>
<div class="r" style="left:302px;top:1186px;width:2210px;height:52px;background:#f1f3f4;"></div>
<div class="r" style="left:302px;top:1238px;width:2210px;height:2px;background:#cbcdd1;"></div>
<svg class="r" style="left:317px;top:1199px;" width="32" height="28" viewBox="0 0 32 28"><rect x="1.800" y="1.800" width="28.400" height="24.400" fill="none" stroke="#6e6e6e" stroke-width="1.700"/><path d="M10 2v24" stroke="#6e6e6e" stroke-width="1.700"/><path d="M15 7.600v12.800l10.200-6.400z" fill="#6e6e6e"/></svg>
<svg class="r" style="left:377px;top:1199px;" width="28" height="28" viewBox="0 0 28 28"><circle cx="14" cy="14" r="11.400" fill="none" stroke="#6e6e6e" stroke-width="3.400"/><path d="M6 6.200l16 15.800" stroke="#6e6e6e" stroke-width="3.400"/></svg>
<div class="r" style="left:426.3px;top:1196px;width:2px;height:32px;background:#cacaca;"></div>
<span class="t" style="left:445.00px;top:1200.00px;font-size:24px;line-height:24px;color:#5a5a5a;letter-spacing:0.283px;">CB debugger cont…</span>
<svg class="r" style="left:688px;top:1206px;" width="15" height="12" viewBox="0 0 15 12"><path d="M0 0h14.500L7.250 12z" fill="#6e6e6e"/></svg>
<div class="r" style="left:720px;top:1196px;width:2px;height:32px;background:#cacaca;"></div>
<svg class="r" style="left:741px;top:1199px;" width="34" height="26" viewBox="0 0 34 26"><path d="M17 2.500C9.500 2.500 3.400 7.200 1 13c2.400 5.800 8.500 10.500 16 10.500S30.600 18.800 33 13C30.600 7.200 24.500 2.500 17 2.500z" fill="#6e6e6e"/><circle cx="17" cy="13" r="7" fill="#f1f3f4"/><circle cx="17" cy="13" r="4" fill="#6e6e6e"/></svg>
<div class="r" style="left:794px;top:1196px;width:2px;height:32px;background:#cacaca;"></div>
<div class="r" style="left:808px;top:1193px;width:447.5px;height:41px;background:#fff;border:2px solid #dedede;"></div>
<span class="t" style="left:818.50px;top:1202.00px;font-size:24px;line-height:24px;color:#757575;letter-spacing:-0.069px;">Filter</span>
<span class="t" style="left:1271.00px;top:1200.00px;font-size:24px;line-height:24px;color:#5a5a5a;letter-spacing:-0.006px;">Default levels</span>
<svg class="r" style="left:1424px;top:1206px;" width="15" height="12" viewBox="0 0 15 12"><path d="M0 0h14.500L7.250 12z" fill="#6e6e6e"/></svg>
<div class="r" style="left:1458px;top:1196px;width:2px;height:32px;background:#cacaca;"></div>
<div class="r" style="left:1468px;top:1194px;width:142px;height:36px;background:#f1f3f4;border:2px solid #cfcfcf;border-radius:4px;"></div>
<span class="t" style="left:1489.00px;top:1200.00px;font-size:24px;line-height:24px;color:#5a5a5a;letter-spacing:-0.090px;">No Issues</span>
<div class="r" style="left:2441.5px;top:1196px;width:2px;height:32px;background:#cacaca;"></div>
<svg class="r" style="left:2464px;top:1197px;" width="30" height="30" viewBox="0 0 30 30"><g transform="translate(15 15)"><g fill="#6e6e6e"><path d="M-3.700-14.100h7.400L4.900-8h-9.800z" transform="rotate(0)"/><path d="M-3.700-14.100h7.400L4.900-8h-9.800z" transform="rotate(60)"/><path d="M-3.700-14.100h7.400L4.900-8h-9.800z" transform="rotate(120)"/><path d="M-3.700-14.100h7.400L4.900-8h-9.800z" transform="rotate(180)"/><path d="M-3.700-14.100h7.400L4.900-8h-9.800z" transform="rotate(240)"/><path d="M-3.700-14.100h7.400L4.900-8h-9.800z" transform="rotate(300)"/></g><circle r="7.800" fill="none" stroke="#6e6e6e" stroke-width="4.900"/></g></svg>
<div class="r" style="left:302px;top:1240px;width:2210px;height:202px;background:#fff;"></div>
<svg class="r" style="left:320px;top:1252px;" width="14" height="17" viewBox="0 0 14 17"><path d="M2.500 2.300l7 6-7 6" stroke="#367cf1" stroke-width="2.800" fill="none"/></svg>
<div class="r" style="left:1968px;top:269px;width:70px;height:61px;background:transparent;border:5px solid #e83e22;"></div>
</div></div>
</body></html>
